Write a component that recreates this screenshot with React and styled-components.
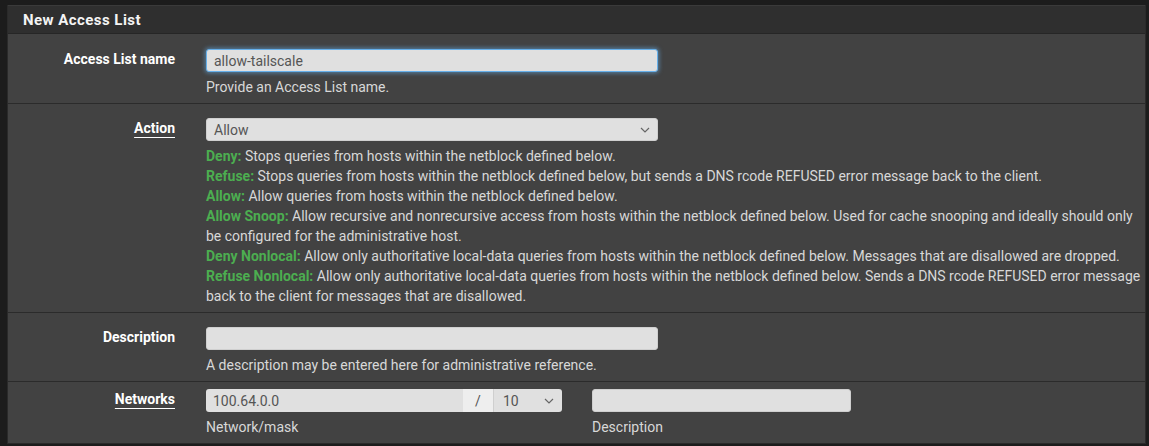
import React from "react";
import styled, { createGlobalStyle } from "styled-components";

const GlobalStyle = createGlobalStyle`
  html, body {
    margin: 0;
    padding: 0;
    background: #1c1c1c;
  }
  body {
    font-family: Roboto, "Liberation Sans", sans-serif;
    font-size: 14px;
    color: #d8d8d8;
  }
`;

const Page = styled.div`
  padding: 5px 3px 0 7px;
  width: 1139px;
`;

const Panel = styled.div`
  background: #424242;
  border: 1px solid #2a2a2a;
  border-top: 0;
`;

const Heading = styled.div`
  height: 29px;
  background: #2f2f2f;
  border-top: 1px solid #3a3a3a;
  border-bottom: 1px solid #262626;
  box-sizing: border-box;
  display: flex;
  align-items: center;
  padding-left: 15px;
  font-weight: 700;
  font-size: 15px;
  letter-spacing: 0.45px;
  color: #f4f4f4;
`;

const Row = styled.div`
  display: flex;
  padding: ${(p) => (p.$tight ? "7px 0 6px" : p.$first ? "15px 0 6px" : "14px 0 6px")};
  border-top: ${(p) => (p.$first ? "0" : "1px solid #2b2b2b")};
`;

const Label = styled.div`
  width: 167px;
  flex: none;
  text-align: right;
  padding-top: 2px;
  font-weight: 700;
  font-size: 14px;
  color: #fff;
  span {
    text-decoration: ${(p) => (p.$link ? "underline" : "none")};
    text-underline-offset: 4px;
    text-decoration-thickness: 1px;
  }
`;

const Field = styled.div`
  flex: 1;
  padding-left: 31px;
  padding-right: 2px;
`;

const Input = styled.div`
  box-sizing: border-box;
  width: ${(p) => p.$w || 452}px;
  height: 23px;
  background: #e0e0e0;
  border-radius: 3px;
  border: 1px solid ${(p) => (p.$focus ? "#66afe9" : "#cfcfcf")};
  box-shadow: ${(p) => (p.$focus ? "0 0 4px 1px rgba(102,175,233,0.6)" : "none")};
  color: #555;
  font-size: 14px;
  padding: 0 7px;
  display: flex;
  align-items: center;
  justify-content: space-between;
`;

const Chevron = () => (
  <svg width="10" height="6" viewBox="0 0 10 6">
    <path d="M1 1 L5 5 L9 1" fill="none" stroke="#666" strokeWidth="1.2" />
  </svg>
);

const Help = styled.div`
  margin-top: 5px;
  line-height: 20px;
`;

const Term = styled.span`
  color: #4cae50;
  font-weight: 700;
`;

const Group = styled.div`
  display: flex;
  width: 356px;
  height: 23px;
`;

const GroupInput = styled.div`
  box-sizing: border-box;
  flex: 1;
  background: #e0e0e0;
  border-radius: 3px 0 0 3px;
  color: #555;
  padding: 0 7px;
  display: flex;
  align-items: center;
`;

const Addon = styled.div`
  width: 30px;
  background: #eeeeee;
  color: #555;
  display: flex;
  align-items: center;
  justify-content: center;
`;

const GroupSelect = styled.div`
  box-sizing: border-box;
  width: 69px;
  background: #e0e0e0;
  border-radius: 0 3px 3px 0;
  border-left: 1px solid #cfcfcf;
  color: #555;
  padding: 0 8px 0 9px;
  display: flex;
  align-items: center;
  justify-content: space-between;
`;

const Cols = styled.div`
  display: flex;
  gap: 30px;
`;

const Col = styled.div`
  display: flex;
  flex-direction: column;
`;

const actions = [
  ["Deny:", " Stops queries from hosts within the netblock defined below."],
  ["Refuse:", " Stops queries from hosts within the netblock defined below, but sends a DNS rcode REFUSED error message back to the client."],
  ["Allow:", " Allow queries from hosts within the netblock defined below."],
  ["Allow Snoop:", " Allow recursive and nonrecursive access from hosts within the netblock defined below. Used for cache snooping and ideally should only be configured for the administrative host."],
  ["Deny Nonlocal:", " Allow only authoritative local-data queries from hosts within the netblock defined below. Messages that are disallowed are dropped."],
  ["Refuse Nonlocal:", " Allow only authoritative local-data queries from hosts within the netblock defined below. Sends a DNS rcode REFUSED error message back to the client for messages that are disallowed."],
];

export default function App() {
  return (
    <>
      <GlobalStyle />
      <Page>
        <Panel>
          <Heading>New Access List</Heading>
          <Row $first>
            <Label><span>Access List name</span></Label>
            <Field>
              <Input $focus>allow-tailscale</Input>
              <Help>Provide an Access List name.</Help>
            </Field>
          </Row>
          <Row>
            <Label $link><span>Action</span></Label>
            <Field>
              <Input>
                Allow
                <Chevron />
              </Input>
              <Help>
                {actions.map(([t, d]) => (
                  <div key={t}>
                    <Term>{t}</Term>
                    {d}
                  </div>
                ))}
              </Help>
            </Field>
          </Row>
          <Row>
            <Label><span>Description</span></Label>
            <Field>
              <Input />
              <Help>A description may be entered here for administrative reference.</Help>
            </Field>
          </Row>
          <Row $tight>
            <Label $link><span>Networks</span></Label>
            <Field>
              <Cols>
                <Col>
                  <Group>
                    <GroupInput>100.64.0.0</GroupInput>
                    <Addon>/</Addon>
                    <GroupSelect>
                      10
                      <Chevron />
                    </GroupSelect>
                  </Group>
                  <Help>Network/mask</Help>
                </Col>
                <Col>
                  <Input $w={259} />
                  <Help>Description</Help>
                </Col>
              </Cols>
            </Field>
          </Row>
        </Panel>
      </Page>
    </>
  );
}
